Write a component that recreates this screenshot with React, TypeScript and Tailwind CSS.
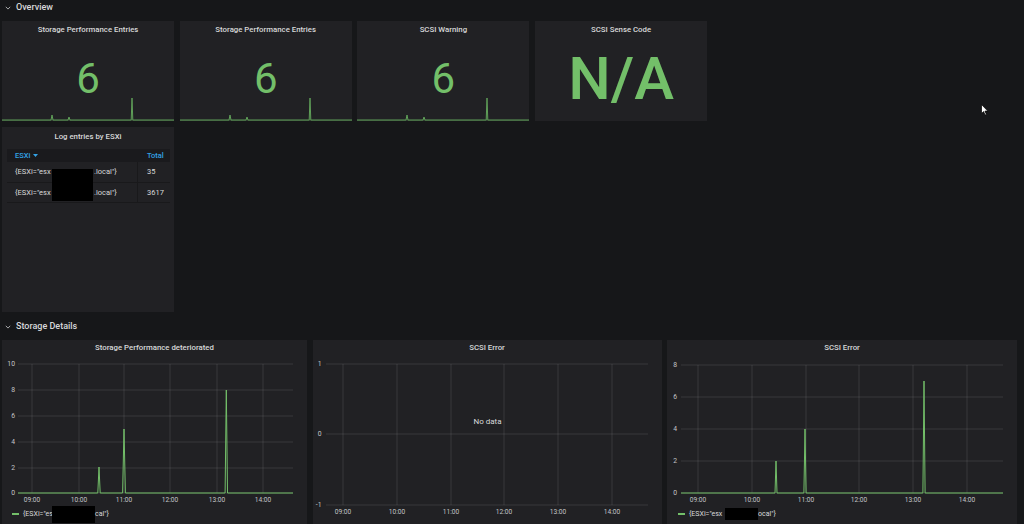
type Tick = { label: string; y: number };

function Chevron() {
  return (
    <svg width="6" height="4" viewBox="0 0 6 4" className="shrink-0">
      <path d="M0.8 0.8 L3 3.1 L5.2 0.8" fill="none" stroke="#a5a6a8" strokeWidth="1" />
    </svg>
  );
}

function Sparkline() {
  const b = 24;
  const line = `0,${b} 49,${b} 50,${b - 5} 51,${b} 66,${b} 67,${b - 3} 68,${b} 129.2,${b} 130,${b - 22} 130.8,${b} 172,${b}`;
  return (
    <svg className="absolute bottom-0 left-0" width="172" height="25" viewBox="0 0 172 25">
      <polygon points={`${line} 172,25 0,25`} fill="rgba(115,191,105,0.18)" />
      <polyline points={line} fill="none" stroke="#5f9f58" strokeWidth="1" />
    </svg>
  );
}

function StatPanel({ title, value, big }: { title: string; value: string; big?: boolean }) {
  return (
    <div className="relative flex h-[100px] w-[172px] flex-col overflow-hidden bg-[#212124]">
      <div className="flex h-[17px] items-center justify-center pt-[1px] text-[7.8px] font-medium text-[#d8d9da]">
        {title}
      </div>
      {big ? (
        <div className="flex flex-1 items-center justify-center pb-[1px] text-[60px] font-medium leading-none text-[#73bf69]">
          {value}
        </div>
      ) : (
        <div className="flex flex-1 items-center justify-center pb-[2px] text-[42px] leading-none text-[#73bf69]">{value}</div>
      )}
      {!big && <Sparkline />}
    </div>
  );
}

function TablePanel() {
  const rows = [{ total: "35" }, { total: "3617" }];
  return (
    <div className="relative h-[185px] w-[172px] bg-[#212124]">
      <div className="flex h-[18px] items-center justify-center pt-[1px] text-[7.8px] font-medium text-[#d8d9da]">
        Log entries by ESXi
      </div>
      <div className="ml-[5px] mt-[4px] w-[163px] text-[7.5px] text-[#d8d9da]">
        <div className="flex h-[13px] items-center bg-[#1a1a1d] font-medium text-[#33a2e5]">
          <div className="flex w-[131px] items-center gap-[3px] pl-[8px]">
            ESXi
            <svg width="5" height="3" viewBox="0 0 5 3">
              <path d="M0 0 L5 0 L2.5 3 Z" fill="#33a2e5" />
            </svg>
          </div>
          <div className="pl-[9px]">Total</div>
        </div>
        {rows.map((r, i) => (
          <div
            key={i}
            className={i === 0 ? "flex h-[21px] items-center border-b border-[#19191b]" : "flex h-[20px] items-center border-b border-[#19191b]"}
          >
            <div className="flex h-full w-[131px] items-center whitespace-nowrap border-r border-[#19191b] pl-[8px]">
              <span className="inline-block w-[79px]">{'{ESXi="esx'}</span>
              {'.local"}'}
            </div>
            <div className="pl-[9px]">{r.total}</div>
          </div>
        ))}
      </div>
      {/* redacted host name */}
      <div className="absolute left-[50px] top-[42px] h-[32px] w-[41px] bg-black" />
    </div>
  );
}

function Legend({ lead, leadW, box, boxH, tail }: { lead: string; leadW: string; box: string; boxH: string; tail: string }) {
  return (
    <div className="flex h-[14px] items-center whitespace-nowrap text-[7px] text-[#d8d9da]">
      <span className="mr-[4px] inline-block h-[2px] w-[7px] bg-[#73bf69]" />
      <span className={leadW}>{lead}</span>
      <span className={`${box} ${boxH} inline-block shrink-0 bg-black`} />
      <span>{tail}</span>
    </div>
  );
}

function Graph(props: {
  left: number;
  width: number;
  height: number;
  yTicks: Tick[];
  labelX: number;
  gx1: number;
  gx2: number;
  vx: number[];
  top: number;
  bottom: number;
  timeY: number;
  series?: string;
  noData?: boolean;
}) {
  const { left, width, height, yTicks, labelX, gx1, gx2, vx, top, bottom, timeY, series, noData } = props;
  const times = ["09:00", "10:00", "11:00", "12:00", "13:00", "14:00"];
  return (
    <svg width={width} height={height} viewBox={`${left} 354 ${width} ${height}`} className="block">
      {yTicks.map((t) => (
        <g key={t.label}>
          <line x1={gx1} x2={gx2} y1={t.y} y2={t.y} stroke="rgba(255,255,255,0.1)" strokeWidth="1" />
          <text x={labelX} y={t.y} textAnchor="end" dominantBaseline="middle" fontSize="6.8" fill="#c4c5c7">
            {t.label}
          </text>
        </g>
      ))}
      {vx.map((x, i) => (
        <g key={x}>
          <line x1={x} x2={x} y1={top} y2={bottom} stroke="rgba(255,255,255,0.1)" strokeWidth="1" />
          <text x={x} y={timeY} textAnchor="middle" dominantBaseline="middle" fontSize="6.6" fill="#c4c5c7">
            {times[i]}
          </text>
        </g>
      ))}
      {series && <polyline points={series} fill="none" stroke="#73bf69" strokeWidth="1" strokeLinejoin="round" />}
      {noData && (
        <text x={left + width / 2} y={422} textAnchor="middle" dominantBaseline="middle" fontSize="8" fill="#d8d9da">
          No data
        </text>
      )}
    </svg>
  );
}

export default function App() {
  return (
    <div className="relative h-[524px] w-[1024px] overflow-hidden bg-[#161719] font-[Roboto,'Liberation_Sans',sans-serif] text-[#d8d9da]">
      <div className="flex h-[16px] items-center gap-[5px] pl-[5px]">
        <Chevron />
        <span className="text-[9px] font-medium text-[#d8d9da]">Overview</span>
      </div>

      <div className="flex flex-col gap-[6px] pl-[2px] pt-[5px]">
        <div className="flex gap-[5.7px]">
          <StatPanel title="Storage Performance Entries" value="6" />
          <StatPanel title="Storage Performance Entries" value="6" />
          <StatPanel title="SCSI Warning" value="6" />
          <StatPanel title="SCSI Sense Code" value="N/A" big />
        </div>
        <TablePanel />
      </div>

      <div className="flex h-[28px] items-center gap-[5px] pl-[5px] pt-[1px]">
        <Chevron />
        <span className="text-[9px] font-medium text-[#d8d9da]">Storage Details</span>
      </div>

      <div className="flex gap-[5.5px] pl-[2px]">
        <div className="h-[184px] w-[305px] overflow-hidden bg-[#212124]">
          <div className="flex h-[14px] items-center justify-center pt-[1px] text-[7.8px] font-medium">
            Storage Performance deteriorated
          </div>
          <Graph
            left={2}
            width={305}
            height={153}
            yTicks={[
              { label: "10", y: 364 },
              { label: "8", y: 390 },
              { label: "6", y: 416 },
              { label: "4", y: 442 },
              { label: "2", y: 468 },
              { label: "0", y: 493 },
            ]}
            labelX={15}
            gx1={18}
            gx2={293}
            vx={[32, 79, 124, 170, 217, 263]}
            top={364}
            bottom={493}
            timeY={500.5}
            series="18,493 97.8,493 99,467 100.2,493 122.6,493 124,429 125.4,493 225.1,493 226.3,390 227.5,493 293,493"
          />
          <div className="pl-[10px]">
            <Legend lead={'{ESXi="es'} leadW="w-[29px]" box="w-[43px]" boxH="h-[17px]" tail={'cal"}'} />
          </div>
        </div>

        <div className="h-[184px] w-[349px] overflow-hidden bg-[#212124]">
          <div className="flex h-[14px] items-center justify-center pt-[1px] text-[7.8px] font-medium">SCSI Error</div>
          <Graph
            left={313}
            width={349}
            height={170}
            yTicks={[
              { label: "1", y: 364 },
              { label: "0", y: 434 },
              { label: "-1", y: 505 },
            ]}
            labelX={321.5}
            gx1={326}
            gx2={648}
            vx={[343, 397, 451, 504, 558, 612]}
            top={364}
            bottom={505}
            timeY={512}
            noData
          />
        </div>

        <div className="h-[184px] w-[350px] overflow-hidden bg-[#212124]">
          <div className="flex h-[14px] items-center justify-center pt-[1px] text-[7.8px] font-medium">SCSI Error</div>
          <Graph
            left={667}
            width={350}
            height={153}
            yTicks={[
              { label: "8", y: 365 },
              { label: "6", y: 397 },
              { label: "4", y: 429 },
              { label: "2", y: 461 },
              { label: "0", y: 493 },
            ]}
            labelX={677}
            gx1={681}
            gx2={1003}
            vx={[698, 752, 806, 859, 913, 967]}
            top={365}
            bottom={493}
            timeY={500.5}
            series="681,493 775,493 776,461 777,493 803.9,493 805,429 806.1,493 922.9,493 924,381 925.1,493 1003,493"
          />
          <div className="pl-[11px]">
            <Legend lead={'{ESXi="esx'} leadW="w-[36px]" box="w-[33px]" boxH="h-[12px]" tail={'ocal"}'} />
          </div>
        </div>
      </div>

      {/* mouse pointer */}
      <svg className="absolute left-[981px] top-[104px]" width="8" height="12" viewBox="0 0 8 12">
        <path d="M0.5 0.5 L0.5 9.5 L2.6 7.6 L4.1 11 L5.4 10.4 L3.9 7.1 L6.8 7.1 Z" fill="#ffffff" stroke="#000000" strokeWidth="0.7" />
      </svg>
    </div>
  );
}
